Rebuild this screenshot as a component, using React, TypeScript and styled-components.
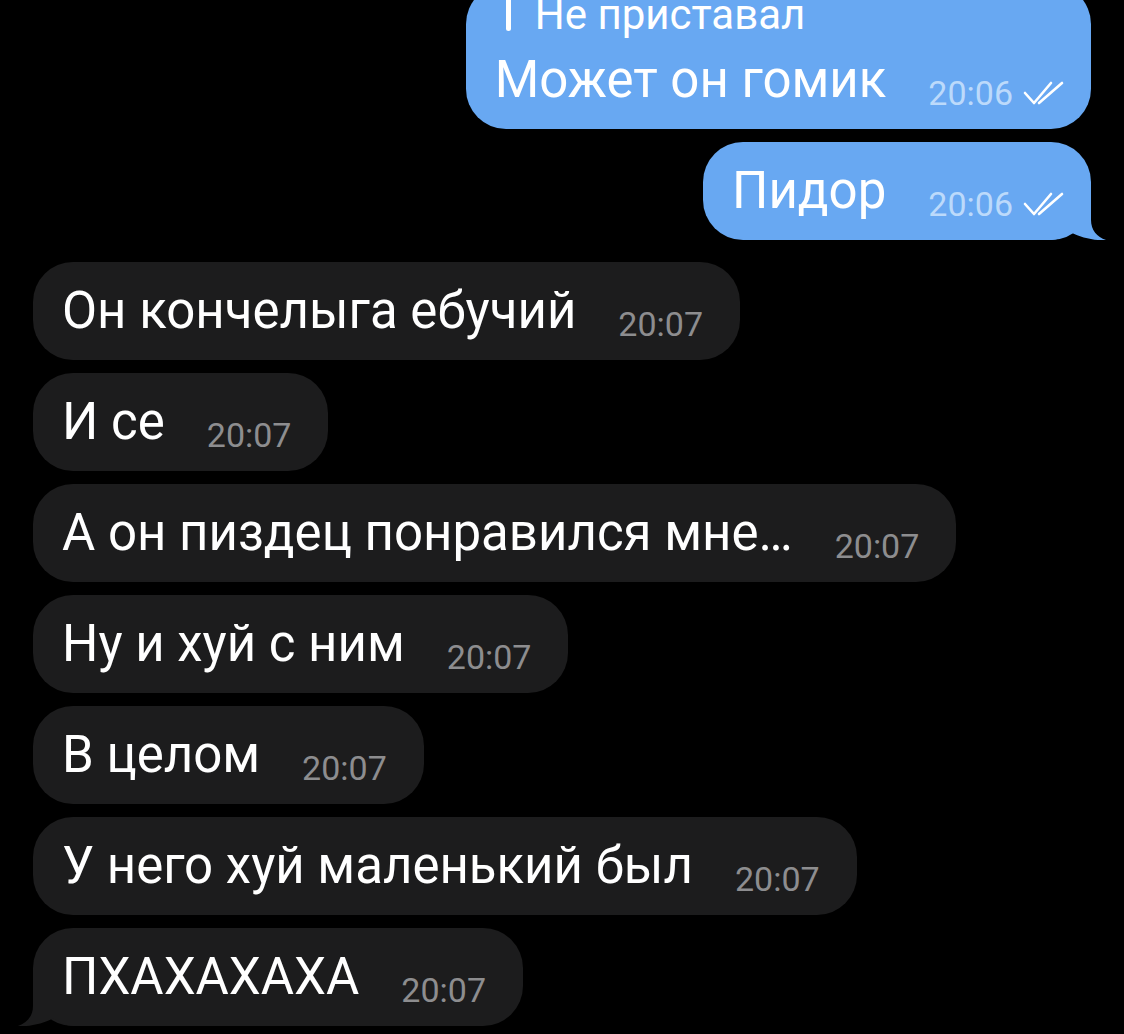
import styled, { createGlobalStyle } from "styled-components";

const Global = createGlobalStyle`
  html, body {
    margin: 0;
    background: #000;
  }
  body {
    font-family: Roboto, "Liberation Sans", sans-serif;
    -webkit-font-smoothing: antialiased;
  }
`;

const Screen = styled.div`
  width: 1124px;
  height: 1034px;
  overflow: hidden;
  background: #000;
`;

const Feed = styled.div`
  display: flex;
  flex-direction: column;
  gap: 13px;
  margin-top: -16px;
  padding: 0 33px;
`;

const Row = styled.div<{ $out?: boolean; $groupStart?: boolean }>`
  display: flex;
  justify-content: ${(p) => (p.$out ? "flex-end" : "flex-start")};
  margin-top: ${(p) => (p.$groupStart ? "9px" : "0")};
`;

const Bubble = styled.div<{ $out?: boolean }>`
  position: relative;
  background: ${(p) => (p.$out ? "#68a8f2" : "#1c1c1d")};
  border-radius: 40px;
  padding: 0 ${(p) => (p.$out ? "26px" : "37px")} 0 29px;
  color: #fff;
  white-space: nowrap;
`;

const Reply = styled.div`
  display: flex;
  align-items: stretch;
  gap: 24px;
  padding: 14px 0 0 11px;
  height: 33px;
  font-size: 42px;
  line-height: 33px;
`;

const ReplyBar = styled.span`
  width: 5px;
  border-radius: 3px;
  background: #fff;
`;

const Line = styled.div`
  position: relative;
  font-size: 51px;
  line-height: 98px;
  height: 98px;
`;

const Time = styled.span<{ $out?: boolean }>`
  display: inline-block;
  margin-left: 42px;
  font-size: 34px;
  line-height: 1;
  vertical-align: -8px;
  color: ${(p) => (p.$out ? "#bcdafb" : "#8d8d8f")};
`;

const Checks = styled.svg`
  margin-left: 10px;
  vertical-align: 0;
`;

const Tail = styled.svg<{ $out?: boolean }>`
  position: absolute;
  bottom: 0;
  ${(p) => (p.$out ? "right: -15px;" : "left: -15px; transform: scaleX(-1);")}
`;

function DoubleCheck() {
  return (
    <Checks width="42" height="24" viewBox="0 0 42 24" fill="none">
      <path d="M2 12 L11 22 L28 2" stroke="#fff" strokeWidth="2.6" strokeLinecap="round" strokeLinejoin="round" />
      <path d="M16 22 L39 2" stroke="#fff" strokeWidth="2.6" strokeLinecap="round" />
    </Checks>
  );
}

function BubbleTail({ out }: { out?: boolean }) {
  return (
    <Tail $out={out} width="55" height="45" viewBox="0 0 55 45">
      <path
        d="M0 0 L40 0 L40 25 C40 35 46 42 55 45 C46 46 30 43 19 37 C13 42 6 45 0 45 Z"
        fill={out ? "#68a8f2" : "#1c1c1d"}
      />
    </Tail>
  );
}

const incoming = [
  "Он кончелыга ебучий",
  "И се",
  "А он пиздец понравился мне…",
  "Ну и хуй с ним",
  "В целом",
  "У него хуй маленький был",
  "ПХАХАХАХА",
];

export default function App() {
  return (
    <Screen>
      <Global />
      <Feed>
        <Row $out>
          <Bubble $out>
            <Reply>
              <ReplyBar />
              <span>Не приставал</span>
            </Reply>
            <Line>
              Может он гомик
              <Time $out>
                20:06
                <DoubleCheck />
              </Time>
            </Line>
          </Bubble>
        </Row>
        <Row $out>
          <Bubble $out>
            <BubbleTail out />
            <Line>
              Пидор
              <Time $out>
                20:06
                <DoubleCheck />
              </Time>
            </Line>
          </Bubble>
        </Row>
        {incoming.map((text, i) => (
          <Row key={i} $groupStart={i === 0}>
            <Bubble>
              {i === incoming.length - 1 && <BubbleTail />}
              <Line>
                {text}
                <Time>20:07</Time>
              </Line>
            </Bubble>
          </Row>
        ))}
      </Feed>
    </Screen>
  );
}
